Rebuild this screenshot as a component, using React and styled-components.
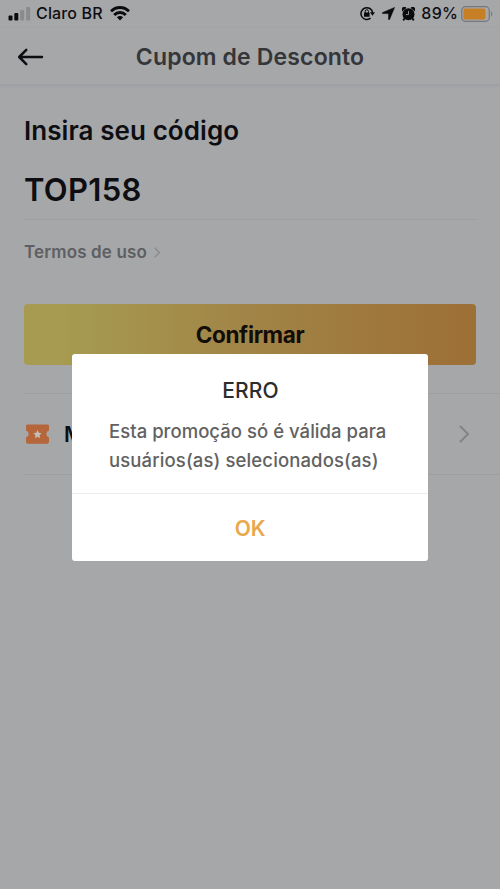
import React, { useState } from 'react';
import styled, { createGlobalStyle } from 'styled-components';

const GlobalStyle = createGlobalStyle`
  * {
    box-sizing: border-box;
  }

  body {
    margin: 0;
    background: #a6a7a9;
  }

  button {
    border: none;
    background: none;
    padding: 0;
    font-family: inherit;
    cursor: pointer;
  }
`;

const Screen = styled.div`
  position: relative;
  width: 500px;
  height: 889px;
  overflow: hidden;
  background: #a6a7a9;
  font-family: Inter, 'Liberation Sans', sans-serif;
  color: #0e0e12;

  svg {
    display: block;
    flex-shrink: 0;
  }
`;

const StatusBar = styled.div`
  display: flex;
  justify-content: space-between;
  height: 28px;
  padding: 0 7px 0 8px;
`;

const StatusGroup = styled.div`
  display: flex;
  align-items: center;
  height: 27px;
`;

const StatusIcons = styled.div`
  display: flex;
  align-items: center;
  gap: 7px;
`;

const StatusText = styled.span`
  font-size: 16px;
  font-weight: ${(props) => props.$weight || 600};
  line-height: 27px;
  white-space: nowrap;
  letter-spacing: ${(props) => props.$spacing || '0'};
  margin: ${(props) => props.$margin || '0'};
`;

const Header = styled.header`
  display: grid;
  grid-template-columns: 48px 1fr 48px;
  align-items: center;
  height: 57px;
  padding-top: 1px;
  border-bottom: 1px solid #9fa0a4;
  box-shadow: 0 1px 3px rgba(120, 122, 140, 0.22);
`;

const BackButton = styled.button`
  padding-left: 17px;
`;

const Title = styled.h1`
  margin: 0;
  text-align: center;
  font-size: 23px;
  font-weight: 600;
  line-height: 32px;
  letter-spacing: 0.15px;
  color: #353639;
`;

const Content = styled.main`
  padding: 28px 24px 0;
`;

const Label = styled.h2`
  margin: 0;
  font-size: 26px;
  font-weight: 600;
  line-height: 36px;
  letter-spacing: 0.07px;
`;

const Code = styled.div`
  height: 71px;
  padding-top: 20px;
  border-bottom: 1px solid #9d9ea0;
  font-size: 31px;
  font-weight: 600;
  line-height: 42px;
  letter-spacing: 0.3px;
`;

const Terms = styled.div`
  display: flex;
  align-items: center;
  gap: 7px;
  height: 24px;
  margin-top: 20px;
  font-size: 17px;
  font-weight: 600;
  letter-spacing: 0.13px;
  color: #5e5f62;
`;

const ConfirmButton = styled.button`
  display: block;
  width: 100%;
  height: 61px;
  margin-top: 40px;
  padding-bottom: 1px;
  border-radius: 4px;
  background: linear-gradient(90deg, #a69b50 8%, #a18447 50%, #9d7037 96%);
  font-size: 22.5px;
  font-weight: 700;
  letter-spacing: -0.35px;
  color: #120d08;
`;

const CouponRow = styled.div`
  display: flex;
  align-items: center;
  height: 82px;
  margin: 28px 0 0 24px;
  padding: 0 31px 0 2px;
  border-top: 1px solid #9d9ea0;
  border-bottom: 1px solid #9d9ea0;
`;

const CouponText = styled.span`
  flex: 1;
  margin-left: 15px;
  font-size: 21px;
  font-weight: 600;
`;

const Overlay = styled.div`
  position: absolute;
  inset: 0;
  display: flex;
  justify-content: center;
  align-items: flex-start;
  padding-top: 354px;
`;

const Dialog = styled.div`
  width: 356px;
  height: 207px;
  border-radius: 3px;
  background: #fff;
`;

const DialogBody = styled.div`
  height: 140px;
  padding: 22px 36px 0 37px;
  border-bottom: 1px solid #ececec;
`;

const DialogTitle = styled.h3`
  margin: 0;
  text-align: center;
  font-size: 21px;
  font-weight: 500;
  line-height: 30px;
  letter-spacing: 0.1px;
  color: #2c2c2c;
`;

const DialogLine = styled.p`
  margin: 0;
  font-size: 18.5px;
  font-weight: 500;
  line-height: 28.5px;
  white-space: nowrap;
  letter-spacing: ${(props) => props.$spacing};
  color: #626262;

  ${DialogTitle} + & {
    margin-top: 11px;
  }
`;

const OkButton = styled.button`
  width: 100%;
  height: 67px;
  padding-top: 1px;
  font-size: 21px;
  font-weight: 600;
  letter-spacing: -0.2px;
  color: #e8a84c;
`;

const SignalIcon = () => (
  <svg width="23" height="16" viewBox="0 0 23 16">
    <rect x="0.5" y="9.5" width="4" height="5" rx="1" fill="#0b0b0d" />
    <rect x="6.3" y="7" width="4" height="7.5" rx="1" fill="#0b0b0d" />
    <rect x="12.2" y="4" width="4" height="10.5" rx="1" fill="#8a8b8d" />
    <rect x="18.2" y="1" width="4" height="13.5" rx="1" fill="#8a8b8d" />
  </svg>
);

const WifiIcon = () => (
  <svg width="20" height="15" viewBox="0 0 20 15" fill="none" stroke="#0b0b0d" strokeWidth="2.8">
    <path d="M1 5.3C6 0.2 14 0.2 19 5.3" />
    <path d="M4.2 8.9C7.4 5.7 12.6 5.7 15.8 8.9" />
    <path d="M10 14.4L6.9 11.3C8.7 9.7 11.3 9.7 13.1 11.3Z" fill="#0b0b0d" stroke="none" />
  </svg>
);

const RotationLockIcon = () => (
  <svg width="15" height="15" viewBox="0 0 15 15">
    <path d="M10.6 12.2A5.9 5.9 0 1 1 12.7 6.6" fill="none" stroke="#0b0b0d" strokeWidth="1.5" />
    <path d="M9.9 6.2H15L12.5 9.8Z" fill="#0b0b0d" />
    <rect x="4" y="6.5" width="5.6" height="4.3" rx="0.6" fill="#0b0b0d" />
    <path d="M5.2 7V5.3a1.6 1.6 0 0 1 3.2 0V7" fill="none" stroke="#0b0b0d" strokeWidth="1" />
  </svg>
);

const LocationIcon = () => (
  <svg width="13" height="13" viewBox="0 0 13 13">
    <path d="M12.6 0.4L7.6 12.4C7.3 13 6.5 12.8 6.5 12.2V6.6H0.9C0.2 6.6 0.1 5.8 0.7 5.5Z" fill="#0b0b0d" stroke="#0b0b0d" strokeWidth="0.5" />
  </svg>
);

const AlarmIcon = () => (
  <svg width="13" height="14" viewBox="0 0 13 14">
    <circle cx="6.5" cy="7.3" r="6" fill="#0b0b0d" />
    <path d="M0.1 4.4A2.5 2.5 0 0 1 4.4 0.9ZM12.9 4.4A2.5 2.5 0 0 0 8.6 0.9Z" fill="#0b0b0d" />
    <path d="M2.8 11.2L1.2 13.4M10.2 11.2L11.8 13.4" stroke="#0b0b0d" strokeWidth="1.8" />
    <path d="M6.5 4V7.6H3.8" fill="none" stroke="#8c8d8f" strokeWidth="1" />
  </svg>
);

const BatteryIcon = () => (
  <svg width="32" height="16" viewBox="0 0 32 16">
    <rect x="0.7" y="0.7" width="27.6" height="14.6" rx="3.8" fill="none" stroke="#77787b" strokeWidth="1.2" />
    <rect x="2.4" y="2.4" width="22" height="11.2" rx="2" fill="#c67f25" />
    <path d="M30 5.5C31.6 6 31.6 10 30 10.5Z" fill="#77787b" />
  </svg>
);

const BackIcon = () => (
  <svg width="27" height="18" viewBox="0 0 27 18" fill="none" stroke="#0e0e12" strokeWidth="2.5" strokeLinecap="round" strokeLinejoin="round">
    <path d="M25 9H2.5M9.3 1.8L2.2 9L9.3 16.2" />
  </svg>
);

const TicketIcon = () => (
  <svg width="23" height="20" viewBox="0 0 23 20">
    <path
      d="M1.5 0.5H21.5C22.5 0.5 23 1 23 2V6.6A3.5 3.5 0 0 0 23 13.4V17.5C23 19 22 19.8 20.7 19.8H2.3C1 19.8 0 19 0 17.5V13.4A3.5 3.5 0 0 0 0 6.6V2C0 1 0.5 0.5 1.5 0.5Z"
      fill="#b5663b"
    />
    <path d="M11.5 6L12.8 8.8L15.6 9.2L13.5 11.2L14.1 14.2L11.5 12.7L8.9 14.2L9.5 11.2L7.4 9.2L10.2 8.8Z" fill="#c4bcb9" />
  </svg>
);

const Chevron = ({ width, height, stroke, color }) => (
  <svg width={width} height={height} viewBox="0 0 10 18" fill="none" stroke={color} strokeWidth={stroke}>
    <path d="M1 1L9 9L1 17" />
  </svg>
);

const App = () => {
  const [showError, setShowError] = useState(true);

  return (
    <>
      <GlobalStyle />
      <Screen>
        <StatusBar>
          <StatusGroup>
            <SignalIcon />
            <StatusText $weight={500} $spacing="0.15px" $margin="0 7px 0 5px">Claro BR</StatusText>
            <WifiIcon />
          </StatusGroup>
          <StatusGroup>
            <StatusIcons>
              <RotationLockIcon />
              <LocationIcon />
              <AlarmIcon />
            </StatusIcons>
            <StatusText $weight={500} $spacing="0.2px" $margin="0 3px 0 6px">89%</StatusText>
            <BatteryIcon />
          </StatusGroup>
        </StatusBar>

        <Header>
          <BackButton aria-label="Voltar">
            <BackIcon />
          </BackButton>
          <Title>Cupom de Desconto</Title>
        </Header>

        <Content>
          <Label>Insira seu código</Label>
          <Code>TOP158</Code>
          <Terms>
            Termos de uso
            <Chevron width={6} height={11} stroke={2} color="#858689" />
          </Terms>
          <ConfirmButton onClick={() => setShowError(true)}>Confirmar</ConfirmButton>
        </Content>

        <CouponRow>
          <TicketIcon />
          <CouponText>Meu</CouponText>
          <Chevron width={10} height={18} stroke={2} color="#838487" />
        </CouponRow>

        {showError && (
          <Overlay>
            <Dialog>
              <DialogBody>
                <DialogTitle>ERRO</DialogTitle>
                <DialogLine $spacing="0.04px">Esta promoção só é válida para</DialogLine>
                <DialogLine $spacing="0.12px">usuários(as) selecionados(as)</DialogLine>
              </DialogBody>
              <OkButton onClick={() => setShowError(false)}>OK</OkButton>
            </Dialog>
          </Overlay>
        )}
      </Screen>
    </>
  );
};

export default App;
